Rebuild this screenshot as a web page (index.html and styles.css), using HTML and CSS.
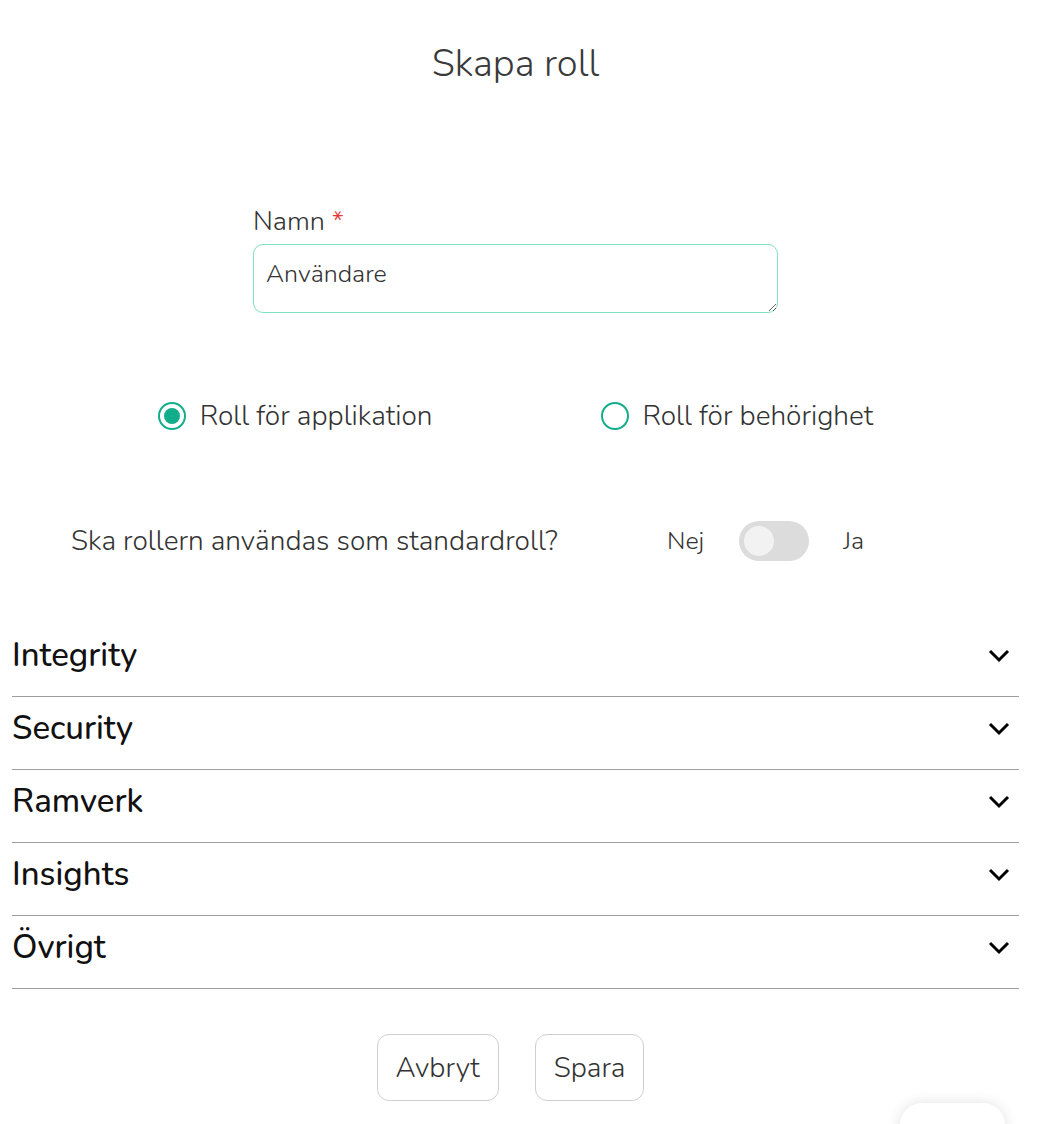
FILE: index.html
```html
<!DOCTYPE html>
<html lang="sv">
<head>
    <meta charset="UTF-8">
    <meta name="viewport" content="width=device-width, initial-scale=1.0">
    <title>Skapa roll</title>
    <link rel="stylesheet" href="styles.css">
</head>
<body>
    <div class="page">
        <h1 class="title">Skapa roll</h1>

        <div class="form-group">
            <label for="name">Namn <span class="required">*</span></label>
            <textarea id="name" autofocus>Användare</textarea>
        </div>

        <div class="role-type">
            <label class="radio">
                <input type="radio" name="roleType" checked>
                <span class="radio-mark"></span>
                Roll för applikation
            </label>
            <label class="radio">
                <input type="radio" name="roleType">
                <span class="radio-mark"></span>
                Roll för behörighet
            </label>
        </div>

        <div class="default-role">
            <span class="question">Ska rollern användas som standardroll?</span>
            <span class="switch-label">Nej</span>
            <label class="switch">
                <input type="checkbox">
                <span class="slider"></span>
            </label>
            <span class="switch-label">Ja</span>
        </div>

        <div class="accordion">
            <div class="accordion-item">
                <span>Integrity</span>
                <svg class="chevron" viewBox="0 0 22 14"><polyline points="2,2 11,11 20,2"/></svg>
            </div>
            <div class="accordion-item">
                <span>Security</span>
                <svg class="chevron" viewBox="0 0 22 14"><polyline points="2,2 11,11 20,2"/></svg>
            </div>
            <div class="accordion-item">
                <span>Ramverk</span>
                <svg class="chevron" viewBox="0 0 22 14"><polyline points="2,2 11,11 20,2"/></svg>
            </div>
            <div class="accordion-item">
                <span>Insights</span>
                <svg class="chevron" viewBox="0 0 22 14"><polyline points="2,2 11,11 20,2"/></svg>
            </div>
            <div class="accordion-item">
                <span>Övrigt</span>
                <svg class="chevron" viewBox="0 0 22 14"><polyline points="2,2 11,11 20,2"/></svg>
            </div>
        </div>

        <div class="actions">
            <button class="btn">Avbryt</button>
            <button class="btn">Spara</button>
        </div>
    </div>

    <div class="floating-widget"></div>
</body>
</html>
```

FILE: styles.css
```css
body {
    margin: 0;
    font-family: "Nunito", "Lato", "Open Sans", sans-serif;
    font-weight: 300;
    color: #333;
    background: #fff;
}
.page {
    width: 1007px;
    margin-left: 12px;
    padding-top: 37px;
}
.title {
    margin: 0;
    text-align: center;
    font-size: 38px;
    font-weight: 300;
    line-height: 54px;
    color: #3a3a3a;
}
.form-group {
    width: 525px;
    margin: 115px auto 0;
}
.form-group label {
    display: block;
    font-size: 27px;
    line-height: 32px;
    margin-bottom: 6px;
}
.required {
    color: #e53935;
}
.form-group textarea {
    display: block;
    width: 100%;
    height: 69px;
    box-sizing: border-box;
    padding: 12px 12px;
    font-family: inherit;
    font-weight: 300;
    font-size: 25px;
    color: #333;
    border: 1px solid #7fe0c2;
    border-radius: 10px;
    outline: none;
    resize: vertical;
    caret-color: #000;
}
.role-type {
    display: flex;
    justify-content: center;
    gap: 168px;
    margin-top: 86px;
}
.radio {
    display: flex;
    align-items: center;
    gap: 14px;
    font-size: 28px;
    line-height: 34px;
    cursor: pointer;
}
.radio input {
    display: none;
}
.radio-mark {
    width: 24px;
    height: 24px;
    border: 2px solid #12ae8c;
    border-radius: 50%;
    display: flex;
    align-items: center;
    justify-content: center;
}
.radio input:checked + .radio-mark::after {
    content: "";
    width: 16px;
    height: 16px;
    border-radius: 50%;
    background: #12ae8c;
}
.default-role {
    display: flex;
    align-items: center;
    margin-top: 88px;
    padding-left: 59px;
    line-height: 40px;
}
.question {
    font-size: 28px;
    width: 596px;
}
.switch-label {
    font-size: 25px;
}
.switch {
    position: relative;
    width: 70px;
    height: 40px;
    margin: 0 34px 0 35px;
}
.switch input {
    display: none;
}
.slider {
    position: absolute;
    inset: 0;
    background: #dcdcdc;
    border-radius: 20px;
}
.slider::before {
    content: "";
    position: absolute;
    left: 5px;
    top: 5px;
    width: 30px;
    height: 30px;
    border-radius: 50%;
    background: #f2f2f2;
}
.accordion {
    margin-top: 63px;
}
.accordion-item {
    display: flex;
    justify-content: space-between;
    align-items: center;
    height: 73px;
    box-sizing: border-box;
    border-bottom: 1px solid #9e9e9e;
    padding: 0 9px 9px 0;
    font-size: 33px;
    font-weight: 500;
    color: #111;
}
.chevron {
    width: 22px;
    height: 14px;
    fill: none;
    stroke: #000;
    stroke-width: 3;
}
.actions {
    display: flex;
    justify-content: center;
    gap: 36px;
    margin-top: 45px;
    padding-right: 10px;
}
.btn {
    height: 67px;
    padding: 0 18px;
    font-family: inherit;
    font-weight: 300;
    font-size: 28px;
    color: #333;
    background: #fff;
    border: 1px solid #cfcfcf;
    border-radius: 12px;
    cursor: pointer;
}
.floating-widget {
    position: fixed;
    left: 900px;
    top: 1103px;
    width: 105px;
    height: 60px;
    background: #fff;
    border-radius: 22px;
    box-shadow: 0 0 14px rgba(0, 0, 0, 0.12);
}
```
